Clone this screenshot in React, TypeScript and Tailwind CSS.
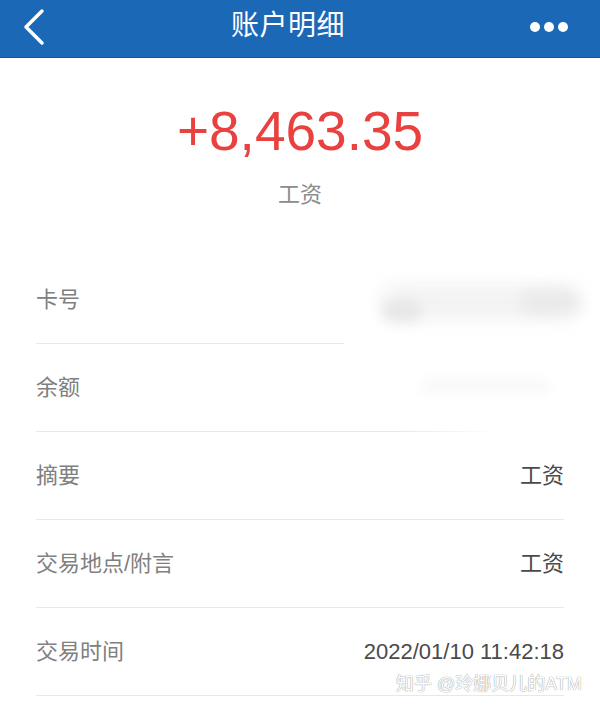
import React from 'react'

const rows = [
    { label: '卡号', value: '' },
    { label: '余额', value: '' },
    { label: '摘要', value: '工资' },
    { label: '交易地点/附言', value: '工资' },
    { label: '交易时间', value: '2022/01/10 11:42:18' },
]

export default function App() {
    return (
        <div className="relative w-[600px] h-[707px] overflow-hidden bg-white font-['Liberation_Sans','Noto_Sans_CJK_SC',sans-serif]">
            {/* header */}
            <div className="flex items-center justify-between h-[58px] px-[22px] bg-[#1b69b6] border-b border-[#15599c]">
                <svg width="24" height="38" viewBox="0 0 24 38" fill="none" className="mb-[3px]">
                    <path d="M20 3L4 19l16 16" stroke="white" strokeWidth="3.5" strokeLinecap="round" strokeLinejoin="round" />
                </svg>
                <div className="text-white text-[28px] leading-none tracking-[0.5px] mb-[6px]">账户明细</div>
                <div className="flex gap-[4px] mr-[10px] mb-[3px]">
                    <span className="w-[10px] h-[10px] rounded-full bg-white" />
                    <span className="w-[10px] h-[10px] rounded-full bg-white" />
                    <span className="w-[10px] h-[10px] rounded-full bg-white" />
                </div>
            </div>

            {/* amount */}
            <div className="flex flex-col items-center h-[198px] pt-[46px]">
                <div className="text-[#e8413f] text-[55px] leading-none">+8,463.35</div>
                <div className="text-[#8c8c8c] text-[22px] leading-none mt-[25px]">工资</div>
            </div>

            {/* rows */}
            <div className="px-[36px]">
                {rows.map(r => (
                    <div key={r.label} className="flex items-center justify-between h-[88px] border-b border-[#e8e8e8] pb-[1px]">
                        <span className="text-[#808080] text-[22px]">{r.label}</span>
                        <span className="text-[#4a4a4a] text-[22px]">{r.value}</span>
                    </div>
                ))}
            </div>

            {/* blurred mask over card number / balance */}
            <div className="absolute left-[344px] top-[268px] w-[256px] h-[90px] bg-white" />
            <div className="absolute left-[400px] top-[358px] w-[200px] h-[90px] bg-gradient-to-r from-white/0 via-white to-white" />
            <div className="absolute left-[380px] top-[284px] w-[200px] h-[36px] rounded-full bg-[#eeeeee] blur-[9px] opacity-70" />
            <div className="absolute left-[382px] top-[300px] w-[40px] h-[22px] rounded-full bg-[#e2e2e2] blur-[6px] opacity-70" />
            <div className="absolute left-[520px] top-[290px] w-[60px] h-[24px] rounded-full bg-[#e6e6e6] blur-[7px] opacity-70" />
            <div className="absolute left-[420px] top-[380px] w-[130px] h-[12px] rounded-full bg-[#f2f2f2] blur-[6px] opacity-60" />

            {/* watermark */}
            <div className="absolute right-[18px] bottom-[14px] text-white text-[18px] leading-none [text-shadow:0_0_1px_#a0a0a0,0_0_1px_#a0a0a0]">
                知乎 @玲娜贝儿的ATM
            </div>
        </div>
    )
}
